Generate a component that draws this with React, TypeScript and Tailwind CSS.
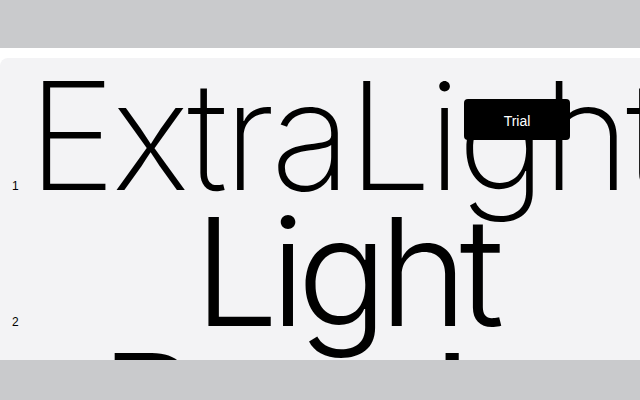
import React from 'react'

const rows = [
  { n: 1, label: 'ExtraLight', weight: 'font-extralight tracking-[-0.027em]' },
  { n: 2, label: 'Light', weight: 'font-light tracking-[-0.055em]' },
  { n: 3, label: 'Regular', weight: 'font-normal tracking-[-0.05em]' },
]

export default function App() {
  return (
    <div className="h-[400px] w-[640px] overflow-hidden bg-white flex flex-col" style={{ fontFamily: 'Inter, "Liberation Sans", sans-serif' }}>
      <div className="h-12 shrink-0 bg-[#c9cacc]" />
      <div className="relative flex-1 overflow-hidden pt-2.5">
        <div className="h-full rounded-tl-lg bg-[#f3f3f5] pt-[10px]">
          {rows.map((r) => (
            <div key={r.n} className="flex items-baseline h-[136px]">
              <span className="w-6 shrink-0 pl-3 text-xs text-black" style={{ fontFamily: '"Liberation Sans", sans-serif' }}>
                {r.n}
              </span>
              <div className="flex w-[642px] shrink-0 justify-center">
                <span className={`whitespace-nowrap text-[150px] leading-[136px] text-black ${r.weight}`}>
                  {r.label}
                </span>
              </div>
            </div>
          ))}
        </div>
        <div className="absolute left-[464px] top-[51px] flex h-[41px] w-[106px] items-center justify-center rounded bg-black pt-0.5 text-sm text-white" style={{ fontFamily: '"Liberation Sans", sans-serif' }}>
          Trial
        </div>
      </div>
      <div className="h-10 shrink-0 bg-[#c9cacc]" />
    </div>
  )
}
